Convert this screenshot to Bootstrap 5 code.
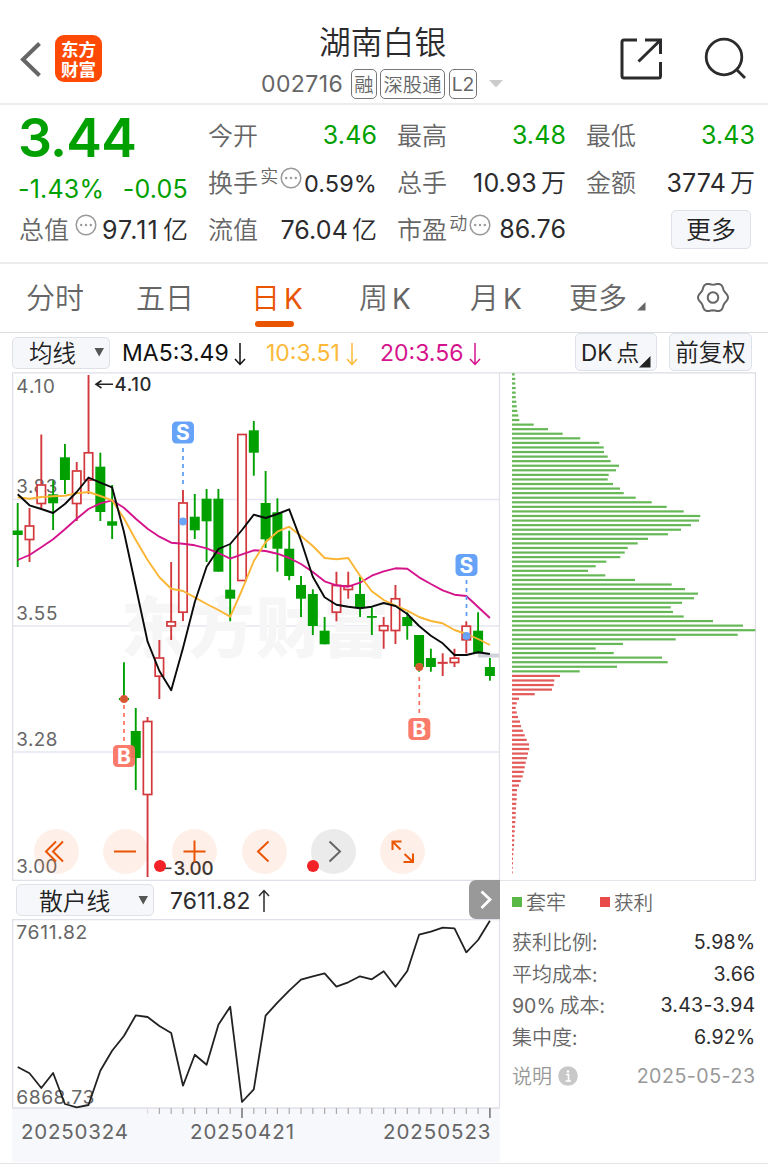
<!DOCTYPE html>
<html lang="zh-CN">
<head>
<meta charset="utf-8">
<meta name="viewport" content="width=device-width, initial-scale=1">
<title>湖南白银 002716</title>
<link href="https://cdn.jsdelivr.net/npm/bootstrap@5.3.0/dist/css/bootstrap.min.css" rel="stylesheet">
<style>
  :root { --up:#d2383c; --down:#00a000; --ink:#2b2b2d; --dim:#666; --edge:#e2e2ea; --accent:#ea5504; }
  body { font-family: Inter, "Noto Sans CJK SC", sans-serif; font-weight:390; color:var(--ink); background:#fff; width:768px; height:1166px; overflow:hidden; line-height:1; letter-spacing:0; }
  svg { display:block; flex:none; }
  span, div { white-space:nowrap; }
  .zh { font-family:"Noto Sans CJK SC", sans-serif; font-weight:350; }
  .dim { color:var(--dim); }
  .down { color:var(--down); }
  .topbar { height:105px; border-bottom:2px solid #ececee; display:grid; grid-template-columns:19px 36px 206px 359px 84px 1fr; }
  .logo { width:47px; height:47px; border-radius:9px; background:#ff4a05; color:#fff; font-family:"Noto Sans CJK SC"; font-weight:700; font-size:17.5px; line-height:19.5px; margin-top:35px; padding-top:4px; text-align:center; }
  .title { font-size:31.8px; height:40px; line-height:40px; margin-top:20px; padding-left:58px; }
  .code { font-size:23px; letter-spacing:.4px; width:90px; }
  .tagbox { border:1.4px solid #777; border-radius:5px; height:30px; line-height:28px; font-size:19.3px; color:#666; text-align:center; }
  .quotes { height:159px; border-bottom:2px solid #ececee; display:grid; grid-template-columns:repeat(4,169px); column-gap:20px; padding:7px 0 0 19px; }
  .quotes .cell { height:47px; font-size:25px; display:flex; align-items:center; letter-spacing:.1px; }
  .quotes .cell .zh { font-size:25px; }
  .quotes .cell > .zh { margin-bottom:3px; }
  .quotes .cell > :last-child { margin-left:auto; }
  .price { font-size:53.5px; font-weight:580; height:47px; line-height:47px; padding-top:2px; letter-spacing:-.8px; margin-left:-1px; }
  .supr { font-size:18px !important; padding-bottom:13px; }
  .dots { margin-bottom:10px; }
  .softbtn { background:#f6f7fa; border:1.5px solid #dfe1e8; border-radius:5px; color:#222; display:flex; align-items:center; }
  .tabs { height:69px; border-bottom:1.5px solid #dadde2; display:grid; grid-template-columns:110px 117px 106px 113px 98px 128px 1fr; padding:0 0 0 26px; font-size:29px; color:#666; line-height:64px; }
  .tabs .k { font-family:Inter; font-weight:390; font-size:28px; }
  .tabs .on { color:var(--accent); position:relative; }
  .tabs .on::after { content:""; position:absolute; left:4px; top:57px; width:39px; height:6px; border-radius:3px; background:var(--accent); }
  .mabar { height:39px; display:grid; grid-template-columns:110px 144px 114px 195px 94px 84px; padding-left:12px; font-size:23px; }
  .mabar .ma { display:flex; align-items:center; height:41px; }
  .charts { display:grid; grid-template-columns:488px 256px; padding-left:12px; }
  .kpane { height:509px; position:relative; }
  .tools { position:absolute; left:22px; top:457px; display:flex; gap:24.2px; }
  .tool { width:45px; height:45px; border-radius:50%; background:rgba(246,112,40,.1); }
  .tool.off { background:rgba(60,60,60,.1); }
  .dot { position:absolute; width:12px; height:12px; border-radius:50%; background:#f22226; }
  .subbar { height:38px; display:flex; align-items:center; font-size:23px; position:relative; }
  .expand { position:absolute; right:0; top:-1px; width:31px; height:39px; background:#999; border-radius:7px 0 0 7px; }
  .facts { padding:5px 0 0 12px; font-size:20px; }
  .facts .line { display:flex; justify-content:space-between; align-items:center; height:31.5px; width:243.5px; }
  .facts .line > :last-child { letter-spacing:.25px; font-size:19.6px; padding-top:2px; }
  .facts .line > .day { letter-spacing:.5px; }
  .sq { width:10px; height:10px; }
  text { font-family:Inter, sans-serif; }
  .foot { border-top:1.5px solid #e4e4e6; margin-top:1px; }
</style>
</head>
<body>
<header class="topbar">
  <span></span>
  <svg width="36" height="102" viewBox="19 0 36 102" fill="none" stroke="#666" stroke-width="4"><path d="M39.500 43.500 23 59.500 39.500 75.500"/></svg>
  <div class="logo"><div>东方</div><div>财富</div></div>
  <div>
    <div class="title zh">湖南白银</div>
    <div class="d-flex align-items-center" style="margin-top:9px">
      <span class="code dim">002716</span>
      <span class="tagbox zh" style="width:26px">融</span>
      <span class="tagbox zh" style="width:65px;margin-left:3px">深股通</span>
      <span class="tagbox" style="width:28px;margin-left:4px">L2</span>
      <svg width="14" height="8" style="margin-left:12px"><path d="M0 0h14l-7 7.500z" fill="#ccc"/></svg>
    </div>
  </div>
  <svg width="46" height="102" viewBox="620 0 46 102" fill="none" stroke="#2b2b2d" stroke-width="3"><path d="M637 40H624q-2 0-2 2V76q0 2 2 2H658.500q2 0 2-2V62M645 40H660.500V54M660 40.500 638.500 61.500"/></svg>
  <svg width="46" height="102" viewBox="704 0 46 102" fill="none" stroke="#2b2b2d" stroke-width="2.800"><circle cx="724" cy="57" r="17.800"/><path d="M736.500 69.500 745 78"/></svg>
</header>

<section class="quotes">
  <div>
    <div class="price down">3.44</div>
    <div class="cell down" style="padding-top:14px;letter-spacing:.2px"><span style="margin-left:-1px">-1.43%</span><span>-0.05</span></div>
    <div class="cell"><span class="zh dim">总值</span><svg class="dots" style="margin-left:6px" width="22" height="22"><use href="#dots"/></svg><span><span style="letter-spacing:1.100px">97.11</span><span class="zh ms-1">亿</span></span></div>
  </div>
  <div>
    <div class="cell"><span class="zh dim">今开</span><span class="down">3.46</span></div>
    <div class="cell"><span class="zh dim">换手</span><span class="zh dim supr" style="margin-left:2px">实</span><svg class="dots" style="margin-left:2px" width="22" height="22"><use href="#dots"/></svg><span style="font-size:23.500px;padding-top:3px">0.59%</span></div>
    <div class="cell"><span class="zh dim">流值</span><span>76.04<span class="zh ms-1">亿</span></span></div>
  </div>
  <div>
    <div class="cell"><span class="zh dim">最高</span><span class="down">3.48</span></div>
    <div class="cell"><span class="zh dim">总手</span><span>10.93<span class="zh ms-1">万</span></span></div>
    <div class="cell"><span class="zh dim">市盈</span><span class="zh dim supr" style="margin-left:2px">动</span><svg class="dots" style="margin-left:2px" width="22" height="22"><use href="#dots"/></svg><span>86.76</span></div>
  </div>
  <div>
    <div class="cell"><span class="zh dim">最低</span><span class="down">3.43</span></div>
    <div class="cell"><span class="zh dim">金额</span><span>3774<span class="zh ms-1">万</span></span></div>
    <div class="cell"><div class="softbtn justify-content-center zh" style="width:80px;height:39px;margin-right:4px;margin-bottom:1px;padding-bottom:1px">更多</div></div>
  </div>
</section>

<nav class="tabs zh">
  <span>分时</span><span>五日</span><span class="on" style="left:-2px">日<span class="k ms-1">K</span></span><span>周<span class="k ms-1">K</span></span><span style="margin-left:-2px">月<span class="k ms-1">K</span></span>
  <span class="d-flex" style="margin-left:-1px">更多<svg class="mt-auto" style="margin-left:10px;margin-bottom:21px" width="9" height="9"><path d="M8.500 0V8.500H0z" fill="#666"/></svg></span>
  <svg width="34" height="67" style="margin-left:-1px" viewBox="697 264 34 67" fill="none" stroke="#666" stroke-width="2"><path id="gear"/><circle cx="713" cy="297.500" r="5.300"/></svg>
</nav>

<div class="mabar">
  <div class="softbtn zh" style="width:98px;height:32px;margin-top:4px;font-size:23.500px;padding-left:16px;padding-bottom:1px">均线<svg class="ms-auto" style="margin-right:4px" width="11" height="9"><path d="M.5 0h9.500l-4.800 8.500z" fill="#555"/></svg></div>
  <div class="ma" style="color:#111"><span>MA5:3.49</span><svg style="margin-left:5px" width="12" height="24"><use href="#dn"/></svg></div>
  <div class="ma" style="color:#fbb93a"><span>10:3.51</span><svg style="margin-left:6px" width="12" height="24"><use href="#dn"/></svg></div>
  <div class="ma" style="color:#d5148c"><span>20:3.56</span><svg style="margin-left:6px" width="12" height="24"><use href="#dn"/></svg></div>
  <div class="softbtn" style="width:82px;height:38px;font-size:22.500px;padding-left:5px;position:relative"><span style="padding-top:2px">DK</span><span class="zh" style="font-size:23px;margin-left:4px;margin-bottom:1px">点</span><svg width="12" height="12" style="position:absolute;right:5px;bottom:2px"><path d="M11.500 0V11.500H0z" fill="#222"/></svg></div>
  <div class="softbtn zh justify-content-center" style="width:83px;height:38px;font-size:23.500px">前复权</div>
</div>

<main class="charts">
  <div class="kpane">
    <svg id="kline" width="488" height="509" viewBox="12 372 488 509"></svg>
    <div class="tools">
      <svg class="tool" viewBox="0 0 45 45" fill="none" stroke="#ea5504" stroke-width="2"><path d="M22 12.500 12 22.500 22 32.500M29 12.500 19 22.500 29 32.500"/></svg>
      <svg class="tool" viewBox="0 0 45 45" fill="none" stroke="#ea5504" stroke-width="2"><path d="M11 22.500H33"/></svg>
      <svg class="tool" viewBox="0 0 45 45" fill="none" stroke="#ea5504" stroke-width="2"><path d="M11.500 22.500H33.500M22.500 11.500V33.500"/></svg>
      <svg class="tool" viewBox="0 0 45 45" fill="none" stroke="#ea5504" stroke-width="2"><path d="M26.500 12.500 16 22.500 26.500 32.500"/></svg>
      <svg class="tool off" viewBox="0 0 45 45" fill="none" stroke="#666" stroke-width="2"><path d="M18.500 12.500 29 22.500 18.500 32.500"/></svg>
      <svg class="tool" viewBox="0 0 45 45" fill="none" stroke="#ea5504" stroke-width="2"><path d="M12.500 21V12.500H21.500M12.500 12.500 20.500 20.500M33 24.500V33H23.500M33 33 24.500 25"/></svg>
    </div>
    <i class="dot" style="left:141.500px;top:488px"></i><i class="dot" style="left:295px;top:488px"></i>
  </div>
  <svg id="chips" width="256" height="509" viewBox="500 372 256 509"></svg>
  <div>
    <div class="subbar">
      <div class="softbtn zh" style="width:138px;height:32px;margin-left:4px;font-size:23.800px;padding-left:22px">散户线<svg class="ms-auto" style="margin-right:4px" width="11" height="9"><path d="M.5 0h9.500l-4.800 8.500z" fill="#555"/></svg></div>
      <span style="margin-left:16px;font-size:22.800px;letter-spacing:.2px;padding-top:3px">7611.82</span>
      <svg style="margin-left:7px;margin-top:2px" width="12" height="24" fill="none" stroke="#2b2b2d" stroke-width="1.500"><path d="M6 23V2M1 7 6 1.500 11 7"/></svg>
      <div class="expand"><svg width="31" height="39" fill="none" stroke="#fff" stroke-width="2.800"><path d="M12.500 11.500 21 19.500 12.500 28"/></svg></div>
    </div>
    <svg id="retail" width="488" height="243" viewBox="12 919 488 243"></svg>
  </div>
  <div class="facts">
    <div class="line dim zh justify-content-start"><i class="sq" style="background:#5ab946"></i><span style="margin-left:4px">套牢</span><i class="sq" style="background:#e94a4a;margin-left:34px"></i><span style="margin-left:4px;letter-spacing:0;padding-top:0">获利</span></div>
    <div class="line" style="margin-top:9px"><span class="zh dim">获利比例:</span><span>5.98%</span></div>
    <div class="line"><span class="zh dim">平均成本:</span><span>3.66</span></div>
    <div class="line"><span class="dim"><span style="font-size:19.500px">90%</span><span class="zh ms-1">成本:</span></span><span>3.43-3.94</span></div>
    <div class="line"><span class="zh dim">集中度:</span><span>6.92%</span></div>
    <div class="line" style="margin-top:8px;color:#999"><span class="zh d-flex align-items-center">说明<svg style="margin-left:6px" width="20" height="20"><circle cx="10" cy="10" r="9.800" fill="#c8c8c8"/><path d="M8 8.500H10.500V15M7.500 15H13" stroke="#fff" stroke-width="1.600" fill="none"/><circle cx="10" cy="5.500" r="1.300" fill="#fff"/></svg></span><span class="day">2025-05-23</span></div>
  </div>
</main>
<div class="foot"></div>

<svg width="0" height="0" style="position:absolute">
  <symbol id="dots" viewBox="0 0 22 22"><circle cx="11" cy="11" r="9.800" fill="none" stroke="#999" stroke-width="1.500"/><g fill="#999"><circle cx="6.200" cy="11" r="1.200"/><circle cx="11" cy="11" r="1.200"/><circle cx="15.800" cy="11" r="1.200"/></g></symbol>
  <symbol id="dn" viewBox="0 0 12 24"><path d="M6 1V22M1 17 6 22.500 11 17" fill="none" stroke="currentColor" stroke-width="1.500"/></symbol>
</svg>

<script>
const X = i => 17.7 + 11.805 * i;
// each candle: direction (1 rise, 0 fall), high, low, body top, body bottom
const candles = [
[0,503,567,530.5,535],[1,508,562,525.5,540],[1,434.5,508,484.5,504],[0,480.5,530,494.3,503.3],[0,444,494,457.3,480],
[1,462,521,470.5,504],[1,375,494,452.3,480.5],[0,452.7,521,466.7,512],[0,485,539,521.3,525.7],[0,662.3,699,698,700.2],
[0,708,790,731,758],[1,717,877,721,795],[1,640,699,657.5,676.7],[1,562,640,621.3,626.5],[1,490,621,502.5,612.7],
[0,494,539,516.7,530.3],[0,489,562,498.7,521.3],[0,489,571.7,498.7,571.7],[0,544,621.3,589.7,598.7],[1,434,581,434,581],
[0,421,475.7,430.3,452.7],[0,471,548,503,539.3],[0,498.3,571.7,512.3,548.7],[0,530.7,580.3,548.7,576],[0,576,617,585,598.7],
[0,589.3,635,594,626],[0,617,644.3,630.7,644.3],[1,571.7,621.3,585,612.7],[1,571.7,598.7,585.3,590],[0,576.7,617,594,608],
[0,607.3,635,616,617.8],[1,617,648.7,625.3,631],[1,585,644,598.3,631],[0,612.3,639.7,617,626],[0,635,671.7,635,667],
[0,648.7,671.7,658,667],[1,653.3,676,662.2,663],[1,648.7,667,657.7,663],[1,621.3,653.3,625.7,640.3],[0,612.3,653.3,630.7,653.3],[0,658,680.7,667,676]];
const ma5 = [494.3,505.3,509,513,504,492,477.5,482.7,487.3,531.7,586.7,641.7,671,690.3,648,602,566.7,549,544,530,514.7,518,514,509.3,540.7,576.7,597.3,604.7,606.7,608.3,606.7,603,606,614,626,635.7,643.3,655,655,652.3,654];
const ma10 = [497.3,498.7,497,496.3,495.7,493.3,492,496,500.3,518.3,540,560,577.3,588.7,591,597.3,604,610,616.7,590,561,542.3,531.7,526.7,536,546,558,559.3,558,575.7,591.3,600,605.7,610.7,617,621,623.3,630,634,639,645];
const ma20 = [560,555,547.3,539.3,529.3,518.7,509,503.3,500.3,507.7,518.7,528.7,536.7,542.7,543.7,545.3,548.3,553,558.7,554.3,550.3,551,553.7,558,564,572,581.3,585.3,586.7,582.7,575.7,571.3,568.3,568.7,577.3,584,590.3,594.7,596,607,618];
const line = (a, c, w) => `<polyline fill="none" stroke="${c}" stroke-width="${w}" stroke-linejoin="round" points="${a.map((y, i) => X(i).toFixed(1) + ',' + y).join(' ')}"/>`;
const label = (x, y, t, len, size = 18.8, fill = '#666', wt = 380) => `<text x="${x}" y="${y}" font-size="${size}" fill="${fill}" font-weight="${wt}" textLength="${len}">${t}</text>`;

let s = '';
for (const y of [499.5, 626, 752]) s += `<path d="M12 ${y}H500" stroke="#e6e6f0" stroke-width="1.6"/>`;
s += `<text x="121" y="652" font-size="66" fill="#f6f6f6" style="font-family:'Noto Sans CJK SC';font-weight:900" textLength="268">东方财富</text>`;
s += `<path d="M12.6 372.800H499.500V880.300H12.600z" fill="none" stroke="#e0e0e8" stroke-width="1.300"/>`;
s += '<path d="M478 655.500H499" stroke="#d0d3da" stroke-width="4"/>';
s += label(16.3,393,'4.10',38.5) + label(16.3,493,'3.83',41) + label(16.3,619.5,'3.55',41) + label(16.3,746.3,'3.28',41) + label(16.3,873,'3.00',41);
candles.forEach(([up, h, l, t, b], i) => {
  const x = X(i), c = up ? '#d2383c' : '#00a000';
  if (up) {
    s += `<path d="M${x} ${h}V${t}M${x} ${b}V${l}" stroke="${c}" stroke-width="1.9"/>`;
    s += `<rect x="${x - 4.2}" y="${t + .5}" width="8.400" height="${Math.max(b - t - 1, .3)}" fill="#fff" stroke="${c}" stroke-width="1.700"/>`;
  } else s += `<path d="M${x} ${h}V${l}" stroke="${c}" stroke-width="1.9"/><rect x="${x - 5}" y="${t}" width="10" height="${b - t}" fill="${c}"/>`;
});
s += line(ma20, '#d5148c', 1.9) + line(ma10, '#fbb534', 1.9) + line(ma5, '#0a0a0a', 1.9);
s += '<path d="M96 384.300H113M101.500 380.500 96 384.300 101.500 388" fill="none" stroke="#222" stroke-width="1.600"/>' + label(114.5,391,'4.10',37,18.5,'#2b2b2d',520);
s += '<path d="M165 868.300H171.500" stroke="#444" stroke-width="1.600"/>' + label(173.5,875.2,'3.00',40,18.8,'#333',520);
const pin = (x, y, ch, c, y1, y2, dotY) => `<path d="M${x} ${y1}V${y2}" stroke="${c}" stroke-width="1.700" stroke-dasharray="4 4"/><circle cx="${x}" cy="${dotY}" r="4" fill="${c}" fill-opacity=".9"/><rect x="${x - 11}" y="${y - 11}" width="22" height="22" rx="4.500" fill="${c}" fill-opacity=".93"/><text x="${x}" y="${y + 7.500}" text-anchor="middle" font-size="21" font-weight="700" fill="#fff">${ch}</text>`;
s += pin(183,432.500,'S','#5a9cf8',448,484,521.500) + pin(466.500,565,'S','#5a9cf8',580,618,636);
s += pin(124,756,'B','#fb7160',705,742,699) + pin(419.300,729,'B','#fb7160',677,715,667);
s += '<circle cx="124" cy="699" r="3.800" fill="#d4582f"/><circle cx="419.300" cy="667" r="3.800" fill="#d4582f"/>';
kline.innerHTML = s;

// chip distribution, right ends of the bars in thirds of a pixel
const held = [44,46,46,47,47,47,49,50,52,55,58,101,144,188,241,298,311,312,323,332,357,348,326,323,339,360,371,407,455,500,551,601,597,573,543,504,444,413,383,374,361,319,287,264,316,405,515,555,594,582,546,512,519,551,639,729,766,713,527,369,287,341,486,503,351,239];
const gain = [180,163,161,156,104,57,50,47,50,54,60,63,69,74,80,87,88,84,81,77,74,71,68,62,57,51,50,50,49,48,47,47,46,45,44,43,43,42,41,40,39,39,38,38];
s = '<path d="M500 372.800H755.500V880.800H500" fill="none" stroke="#dcdce4" stroke-width="1.300"/>';
[...held, ...gain].forEach((e, i) => { s += `<rect x="512" y="${(373.25 + 4.569 * i).toFixed(2)}" width="${((e - 36) / 3).toFixed(1)}" height="2.200" fill="${i < held.length ? '#66b857' : '#e25a5a'}"/>`; });
chips.innerHTML = s;

const retailY = [1067,1073.3,1088,1073,1104,1107.3,1105,1070.7,1050.7,1036,1015.3,1017,1026,1033,1085.7,1054.7,1064.7,1024.7,1006.7,1102,1089.3,1015.7,1002.7,990.7,979.7,976.3,973.3,986.7,982.3,976.3,979.3,971.3,986.7,971,934.7,931.7,927.7,928.3,952.3,940,920.7];
s = '<rect x="12" y="1108" width="488" height="54" fill="#f7f8fb"/><path d="M12.600 919.500H499.500V1108H12.600z" fill="none" stroke="#e0e0e8" stroke-width="1.300"/>';
for (let i = 11; i <= 40; i++) { const big = i === 19 || i === 40; s += `<path d="M${X(i)} 1108V${big ? 1118 : 1114}" stroke="${i === 11 ? '#ddd' : big ? '#888' : '#aaa'}" stroke-width="${big ? 1.8 : 1.2}"/>`; }
s += label(16.3,939,'7611.82',71,19.3) + label(16.3,1104,'6868.73',78,19.3);
s += line(retailY, '#222', 1.8);
s += label(21,1139,'20250324',107,20.5) + label(190,1139,'20250421',104,20.5) + label(383,1139,'20250523',107.500,20.5);
retail.innerHTML = s;

// six-lobed gear outline
let g = '';
for (let a = 0; a <= 360; a += 5) { const t = a * Math.PI / 180, r = 13.9 + 1.1 * Math.cos(6 * t) ; g += (a ? 'L' : 'M') + (713 + r * Math.cos(t)).toFixed(1) + ' ' + (297.5 + r * Math.sin(t)).toFixed(1); }
document.getElementById('gear').setAttribute('d', g + 'z');
</script>
<script src="https://cdn.jsdelivr.net/npm/bootstrap@5.3.0/dist/js/bootstrap.bundle.min.js"></script>
</body>
</html>
